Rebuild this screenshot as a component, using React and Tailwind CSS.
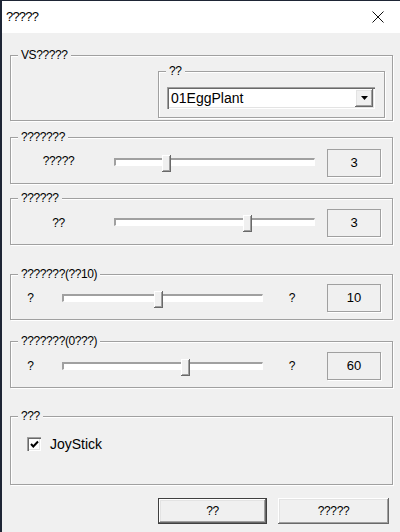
import React from 'react';

const font = "font-['Liberation_Sans',Arial,sans-serif]";

const Group = ({ label, className = '', children }) => (
  <div className={`relative border border-[#a0a0a0] shadow-[inset_1px_1px_0_#fff,1px_1px_0_#fff] ${className}`}>
    <span className="absolute left-[7px] top-[-8px] bg-[#f0f0f0] px-[3px] text-[12px] leading-[14px] tracking-[-0.4px] text-black">
      {label}
    </span>
    {children}
  </div>
);

const Slider = ({ pos }) => (
  <div className="relative h-[8px] w-[201px] border-t-2 border-l-2 border-t-[#a0a0a0] border-l-[#a0a0a0] border-b border-r border-b-white border-r-white bg-white">
    <div
      className="absolute top-[-5px] h-[17px] w-[9px] bg-[#f0f0f0] shadow-[inset_-1px_-1px_0_#696969,inset_1px_1px_0_#fff,inset_-2px_-2px_0_#a0a0a0]"
      style={{ left: pos - 2 }}
    />
  </div>
);

const ValueBox = ({ value }) => (
  <div className="flex h-[28px] w-[54px] items-center justify-center border border-[#a0a0a0] shadow-[1px_1px_0_#fff] text-[13px] text-black">
    {value}
  </div>
);

const raised = 'bg-[#f0f0f0] shadow-[inset_-1px_-1px_0_#696969,inset_1px_1px_0_#fff,inset_-2px_-2px_0_#a0a0a0,inset_2px_2px_0_#e3e3e3]';

export default function App() {
  return (
    <div className={`${font} flex h-[532px] w-[400px] flex-col border-t border-l-2 border-[#1e2535] bg-[#f0f0f0] text-black`}>
      {/* title bar */}
      <div className="flex h-[32px] shrink-0 items-center justify-between bg-white pl-[4px] pr-[16px]">
        <span className="text-[13px] tracking-[-0.8px]">?????</span>
        <svg width="12" height="12" viewBox="0 0 12 12">
          <path d="M0.5 0.5 L11.5 11.5 M11.5 0.5 L0.5 11.5" stroke="#111" strokeWidth="1" fill="none" />
        </svg>
      </div>

      <div className="flex flex-col pl-[8px] pr-[7px]">
        <Group label="VS?????" className="mt-[22px] flex h-[66px] justify-end pr-[7px] pt-[15px]">
          <Group label="??" className="h-[47px] w-[227px] pl-[8px] pr-[9px] pt-[15px]">
            <div className="flex h-[22px] items-center bg-white pl-[4px] shadow-[inset_1px_1px_0_#a0a0a0,inset_2px_2px_0_#696969,inset_-1px_-1px_0_#fff,inset_-2px_-2px_0_#e3e3e3]">
              <span className="flex-1 text-[14px] leading-none">01EggPlant</span>
              <div className={`mr-[2px] flex h-[18px] w-[18px] items-center justify-center ${raised}`}>
                <svg width="7" height="4" viewBox="0 0 7 4">
                  <polygon points="0,0 7,0 3.5,4" fill="#000" />
                </svg>
              </div>
            </div>
          </Group>
        </Group>

        <Group label="???????" className="mt-[16px] flex h-[47px] items-start pt-[11px]">
          <div className="flex h-[28px] items-center">
            <div className="mb-[4px] w-[95px] text-center text-[12px] tracking-[-0.4px]">?????</div>
            <div className="ml-[8px] mb-[2px]">
              <Slider pos={48} />
            </div>
            <div className="ml-[12px]">
              <ValueBox value="3" />
            </div>
          </div>
        </Group>

        <Group label="??????" className="mt-[14px] flex h-[47px] items-start pt-[10px]">
          <div className="flex h-[28px] items-center">
            <div className="w-[95px] text-center text-[12px] tracking-[-0.4px]">??</div>
            <div className="ml-[8px] mb-[2px]">
              <Slider pos={129} />
            </div>
            <div className="ml-[12px]">
              <ValueBox value="3" />
            </div>
          </div>
        </Group>

        <Group label="???????(??10)" className="mt-[29px] flex h-[46px] items-start pt-[9px]">
          <div className="flex h-[28px] items-center">
            <div className="w-[39px] text-center text-[12px]">?</div>
            <div className="ml-[12px]">
              <Slider pos={92} />
            </div>
            <div className="w-[58px] text-center text-[12px]">?</div>
            <div className="ml-[6px]">
              <ValueBox value="10" />
            </div>
          </div>
        </Group>

        <Group label="???????(0???)" className="mt-[21px] flex h-[47px] items-start pt-[10px]">
          <div className="flex h-[28px] items-center">
            <div className="w-[39px] text-center text-[12px]">?</div>
            <div className="ml-[12px]">
              <Slider pos={119} />
            </div>
            <div className="w-[58px] text-center text-[12px]">?</div>
            <div className="ml-[6px]">
              <ValueBox value="60" />
            </div>
          </div>
        </Group>

        <Group label="???" className="mt-[28px] h-[69px] pl-[16px] pt-[19px]">
          <label className="flex h-[16px] items-center gap-[9px]">
            <span className="flex h-[14px] w-[14px] items-center justify-center bg-white shadow-[inset_1px_1px_0_#a0a0a0,inset_2px_2px_0_#696969,inset_-1px_-1px_0_#fff,inset_-2px_-2px_0_#e3e3e3]">
              <svg width="9" height="9" viewBox="0 0 9 9">
                <path d="M1 4 L3.3 6.5 L8 1.5" stroke="#000" strokeWidth="2" fill="none" />
              </svg>
            </span>
            <span className="text-[14px] leading-none">JoyStick</span>
          </label>
        </Group>

        <div className="mt-[13px] flex justify-end gap-[11px] pr-[4px]">
          <button className={`h-[26px] w-[109px] border border-[#404040] text-[12px] tracking-[-0.4px] ${raised}`}>??</button>
          <button className={`h-[26px] w-[111px] text-[12px] tracking-[-0.4px] ${raised}`}>?????</button>
        </div>
      </div>
    </div>
  );
}
